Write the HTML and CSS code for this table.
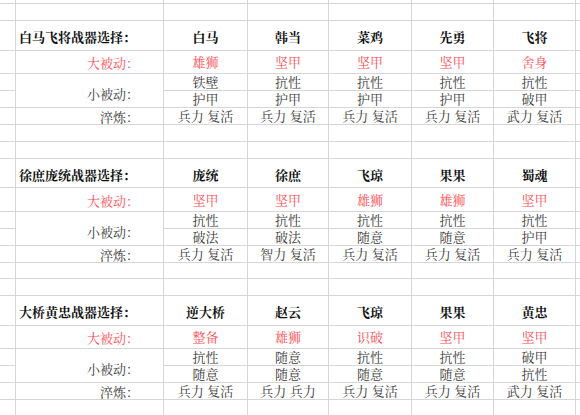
FILE: index.html
```html
<!DOCTYPE html>
<html lang="zh">
<head>
<meta charset="utf-8">
<link rel="stylesheet" href="styles.css">
</head>
<body>
<div class="sheet">
  <!-- row 0 partial -->
  <div class="c"></div><div class="c"></div><div class="c"></div><div class="c"></div><div class="c"></div><div class="c"></div><div class="c"></div><div class="c"></div>
  <!-- row 1 empty -->
  <div class="c"></div><div class="c"></div><div class="c"></div><div class="c"></div><div class="c"></div><div class="c"></div><div class="c"></div><div class="c"></div>

  <!-- block 1 -->
  <div class="c"></div><div class="c title">白马飞将战器选择：</div><div class="c name">白马</div><div class="c name">韩当</div><div class="c name">菜鸡</div><div class="c name">先勇</div><div class="c name">飞将</div><div class="c"></div>
  <div class="c"></div><div class="c label red">大被动：</div><div class="c val red">雄狮</div><div class="c val red">坚甲</div><div class="c val red">坚甲</div><div class="c val red">坚甲</div><div class="c val red">舍身</div><div class="c"></div>
  <div class="c"></div><div class="c label span2">小被动：</div><div class="c val">铁壁</div><div class="c val">抗性</div><div class="c val">抗性</div><div class="c val">抗性</div><div class="c val">抗性</div><div class="c"></div>
  <div class="c"></div><div class="c val">护甲</div><div class="c val">护甲</div><div class="c val">护甲</div><div class="c val">护甲</div><div class="c val">破甲</div><div class="c"></div>
  <div class="c"></div><div class="c label">淬炼：</div><div class="c val">兵力 复活</div><div class="c val">兵力 复活</div><div class="c val">兵力 复活</div><div class="c val">兵力 复活</div><div class="c val">武力 复活</div><div class="c"></div>

  <div class="c"></div><div class="c"></div><div class="c"></div><div class="c"></div><div class="c"></div><div class="c"></div><div class="c"></div><div class="c"></div>
  <div class="c"></div><div class="c"></div><div class="c"></div><div class="c"></div><div class="c"></div><div class="c"></div><div class="c"></div><div class="c"></div>

  <!-- block 2 -->
  <div class="c"></div><div class="c title">徐庶庞统战器选择：</div><div class="c name">庞统</div><div class="c name">徐庶</div><div class="c name">飞琼</div><div class="c name">果果</div><div class="c name">蜀魂</div><div class="c"></div>
  <div class="c"></div><div class="c label red">大被动：</div><div class="c val red">坚甲</div><div class="c val red">坚甲</div><div class="c val red">雄狮</div><div class="c val red">雄狮</div><div class="c val red">坚甲</div><div class="c"></div>
  <div class="c"></div><div class="c label span2">小被动：</div><div class="c val">抗性</div><div class="c val">抗性</div><div class="c val">抗性</div><div class="c val">抗性</div><div class="c val">抗性</div><div class="c"></div>
  <div class="c"></div><div class="c val">破法</div><div class="c val">破法</div><div class="c val">随意</div><div class="c val">随意</div><div class="c val">护甲</div><div class="c"></div>
  <div class="c"></div><div class="c label">淬炼：</div><div class="c val">兵力 复活</div><div class="c val">智力 复活</div><div class="c val">兵力 复活</div><div class="c val">兵力 复活</div><div class="c val">兵力 复活</div><div class="c"></div>

  <div class="c"></div><div class="c"></div><div class="c"></div><div class="c"></div><div class="c"></div><div class="c"></div><div class="c"></div><div class="c"></div>
  <div class="c"></div><div class="c"></div><div class="c"></div><div class="c"></div><div class="c"></div><div class="c"></div><div class="c"></div><div class="c"></div>

  <!-- block 3 -->
  <div class="c"></div><div class="c title">大桥黄忠战器选择：</div><div class="c name">逆大桥</div><div class="c name">赵云</div><div class="c name">飞琼</div><div class="c name">果果</div><div class="c name">黄忠</div><div class="c"></div>
  <div class="c"></div><div class="c label red">大被动：</div><div class="c val red">整备</div><div class="c val red">雄狮</div><div class="c val red">识破</div><div class="c val red">坚甲</div><div class="c val red">坚甲</div><div class="c"></div>
  <div class="c"></div><div class="c label span2">小被动：</div><div class="c val">抗性</div><div class="c val">随意</div><div class="c val">抗性</div><div class="c val">抗性</div><div class="c val">破甲</div><div class="c"></div>
  <div class="c"></div><div class="c val">随意</div><div class="c val">随意</div><div class="c val">随意</div><div class="c val">随意</div><div class="c val">抗性</div><div class="c"></div>
  <div class="c"></div><div class="c label">淬炼：</div><div class="c val">兵力 复活</div><div class="c val">兵力 兵力</div><div class="c val">兵力 复活</div><div class="c val">兵力 复活</div><div class="c val">武力 复活</div><div class="c"></div>

  <div class="c"></div><div class="c"></div><div class="c"></div><div class="c"></div><div class="c"></div><div class="c"></div><div class="c"></div><div class="c"></div>
</div>
</body>
</html>
```

FILE: styles.css
```css
html, body {
  margin: 0;
  padding: 0;
  background: #ffffff;
  overflow: hidden;
}

body {
  width: 580px;
  height: 415px;
  font-family: "Noto Serif CJK SC", "Noto Sans CJK SC", serif;
  font-size: 13px;
  color: #3a3a3a;
}

.sheet {
  display: grid;
  grid-template-columns: 15px 147px 83px 80px 82px 81px 81px 4px;
  grid-template-rows: 3px 16px 29px 22px 16px 16px 16px 16px 16px 28px 23px 16px 16px 16px 15px 16px 29px 22px 16px 16px 16px 16px;
  gap: 1px;
  background: #d6d6d6;
  width: 580px;
}

.c {
  background: #ffffff;
  display: flex;
  align-items: center;
  white-space: pre;
  line-height: 14px;
  min-height: 0;
}

.title {
  font-weight: bold;
  color: #111111;
  padding-left: 3px;
  padding-top: 3px;
}

.name {
  font-weight: bold;
  color: #111111;
  justify-content: center;
  padding-top: 3px;
}

.label {
  justify-content: flex-end;
  padding-right: 24px;
  padding-top: 2px;
}

.span2 {
  grid-row: span 2;
  padding-top: 6px;
}

.val {
  justify-content: center;
}

.red {
  color: #ff4d55;
}
```
